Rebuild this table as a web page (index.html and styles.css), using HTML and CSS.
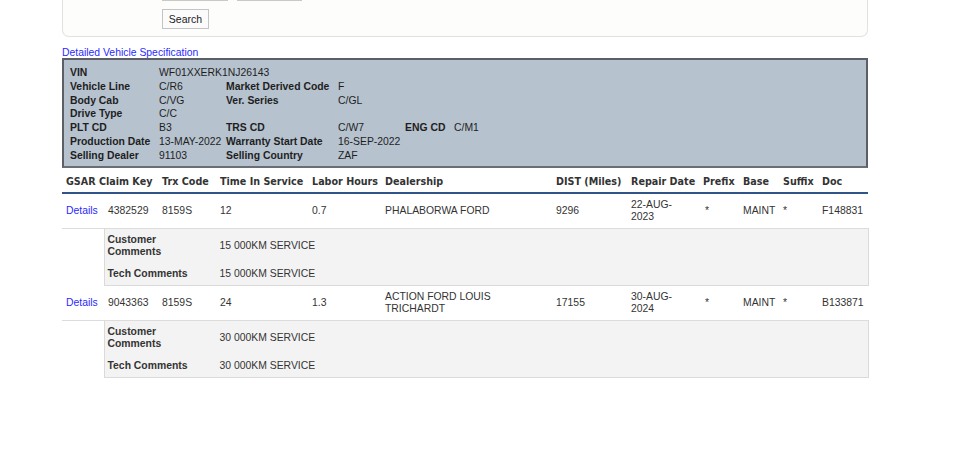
FILE: index.html
```html
<!DOCTYPE html>
<html>
<head>
<meta charset="utf-8">
<link rel="stylesheet" href="styles.css">
</head>
<body>
<div class="page">
  <div class="panel">
    <div class="inputs">
      <span class="box box1"></span>
      <span class="box box2"></span>
    </div>
    <button class="btn">Search</button>
  </div>

  <a class="speclink" href="#">Detailed Vehicle Specification</a>

  <div class="spec">
    <table class="spectable">
      <colgroup>
        <col class="s1"><col class="s2"><col class="s3"><col class="s4"><col class="s5"><col class="s6">
      </colgroup>
      <tr><th>VIN</th><td colspan="5">WF01XXERK1NJ26143</td></tr>
      <tr><th>Vehicle Line</th><td>C/R6</td><th>Market Derived Code</th><td colspan="3">F</td></tr>
      <tr><th>Body Cab</th><td>C/VG</td><th>Ver. Series</th><td colspan="3">C/GL</td></tr>
      <tr><th>Drive Type</th><td colspan="5">C/C</td></tr>
      <tr><th>PLT CD</th><td>B3</td><th>TRS CD</th><td>C/W7</td><th>ENG CD</th><td>C/M1</td></tr>
      <tr><th>Production Date</th><td>13-MAY-2022</td><th>Warranty Start Date</th><td colspan="3">16-SEP-2022</td></tr>
      <tr><th>Selling Dealer</th><td>91103</td><th>Selling Country</th><td colspan="3">ZAF</td></tr>
    </table>
  </div>

  <table class="claims">
    <colgroup>
      <col class="c1"><col class="c2"><col class="c3"><col class="c4"><col class="c5"><col class="c6">
      <col class="c7"><col class="c8"><col class="c9"><col class="c10"><col class="c11"><col class="c12">
    </colgroup>
    <thead>
      <tr>
        <th colspan="2">GSAR Claim Key</th><th>Trx Code</th><th>Time In Service</th><th>Labor Hours</th><th>Dealership</th>
        <th>DIST (Miles)</th><th>Repair Date</th><th>Prefix</th><th>Base</th><th>Suffix</th><th>Doc</th>
      </tr>
    </thead>
    <tbody>
      <tr class="main">
        <td><a href="#">Details</a></td><td>4382529</td><td>8159S</td><td>12</td><td>0.7</td><td>PHALABORWA FORD</td>
        <td>9296</td><td>22-AUG-<br>2023</td><td class="star">*</td><td>MAINT</td><td>*</td><td>F148831</td>
      </tr>
      <tr class="sub">
        <td class="blank"></td>
        <td colspan="11" class="subcell">
          <table class="comments">
            <tr><th>Customer<br>Comments</th><td>15 000KM SERVICE</td></tr>
            <tr><th>Tech Comments</th><td>15 000KM SERVICE</td></tr>
          </table>
        </td>
      </tr>
      <tr class="main">
        <td><a href="#">Details</a></td><td>9043363</td><td>8159S</td><td>24</td><td>1.3</td><td>ACTION FORD LOUIS<br>TRICHARDT</td>
        <td>17155</td><td>30-AUG-<br>2024</td><td class="star">*</td><td>MAINT</td><td>*</td><td>B133871</td>
      </tr>
      <tr class="sub">
        <td class="blank"></td>
        <td colspan="11" class="subcell">
          <table class="comments">
            <tr><th>Customer<br>Comments</th><td>30 000KM SERVICE</td></tr>
            <tr><th>Tech Comments</th><td>30 000KM SERVICE</td></tr>
          </table>
        </td>
      </tr>
    </tbody>
  </table>
</div>
</body>
</html>
```

FILE: styles.css
```css
html, body {
  margin: 0;
  padding: 0;
  background: #ffffff;
}

body {
  font-family: "Liberation Sans", Arial, sans-serif;
  font-size: 10.4px;
  color: #333333;
  overflow: hidden;
}

.page {
  margin-left: 62px;
  width: 806px;
}

.panel {
  margin-top: -17px;
  border: 1px solid #e2e2de;
  border-top: none;
  border-radius: 0 0 7px 7px;
  background: #fdfdfc;
  padding: 0 0 7px 99px;
  display: flex;
  flex-direction: column;
  align-items: flex-start;
  gap: 8px;
}

.inputs {
  display: flex;
  gap: 9px;
}

.box {
  display: block;
  height: 16px;
  border: 1px solid #c9c9c9;
  background: #ffffff;
}

.box1 { width: 64px; }
.box2 { width: 63px; }

.btn {
  font-family: "Liberation Sans", Arial, sans-serif;
  font-size: 10.5px;
  color: #222222;
  background: #fbfbfb;
  border: 1px solid #c4c4c4;
  height: 20px;
  width: 47px;
  padding: 0;
  margin: 0;
}

.speclink {
  display: block;
  margin-top: 10px;
  color: #2a2aff;
  text-decoration: none;
  font-size: 10.4px;
  line-height: 11px;
}

.spec {
  margin-top: 0;
  background: #b6c2ce;
  border: 2px solid #5c6066;
  border-bottom-color: #6a6e74;
  padding: 6px 6px 5px 6px;
  height: 110px;
  box-sizing: border-box;
}

.spectable {
  border-collapse: collapse;
  table-layout: fixed;
  font-size: 10.4px;
  color: #1e1e1e;
}

.s1 { width: 89px; }
.s2 { width: 67px; }
.s3 { width: 112px; }
.s4 { width: 67px; }
.s5 { width: 49px; }
.s6 { width: 60px; }

.spectable th,
.spectable td {
  padding: 0;
  height: 13.8px;
  line-height: 13.8px;
  text-align: left;
  white-space: nowrap;
  font-weight: bold;
}

.spectable td {
  font-weight: normal;
}

.claims {
  margin-top: 5px;
  width: 806px;
  table-layout: fixed;
  border-collapse: collapse;
}

.c1 { width: 42px; }
.c2 { width: 54px; }
.c3 { width: 58px; }
.c4 { width: 92px; }
.c5 { width: 73px; }
.c6 { width: 171px; }
.c7 { width: 75px; }
.c8 { width: 72px; }
.c9 { width: 40px; }
.c10 { width: 40px; }
.c11 { width: 39px; }
.c12 { width: 50px; }

.claims thead th {
  font-family: "DejaVu Sans", Verdana, sans-serif;
  font-size: 9.6px;
  font-weight: bold;
  color: #333333;
  text-align: left;
  padding: 3px 0 5px 4px;
  line-height: 11px;
  white-space: nowrap;
  border-bottom: 2px solid #2f5488;
}

.claims .main td {
  padding: 5px 0 5px 4px;
  line-height: 12px;
  vertical-align: middle;
  border-bottom: 1px solid #dcdcdc;
  white-space: nowrap;
}

.claims .main td.star {
  padding-left: 6px;
}

.claims a {
  color: #2a2aff;
  text-decoration: none;
}

.claims .sub td.blank {
  border: none;
  padding: 0;
}

.claims .sub td.subcell {
  padding: 0;
  background: #f3f3f3;
  border: 1px solid #dadada;
}

.comments {
  border-collapse: collapse;
}

.comments th,
.comments td {
  text-align: left;
  padding: 5px 4px;
  line-height: 12px;
  vertical-align: middle;
}

.comments th {
  width: 104px;
  padding-left: 3px;
  font-weight: bold;
  color: #333333;
}
```
